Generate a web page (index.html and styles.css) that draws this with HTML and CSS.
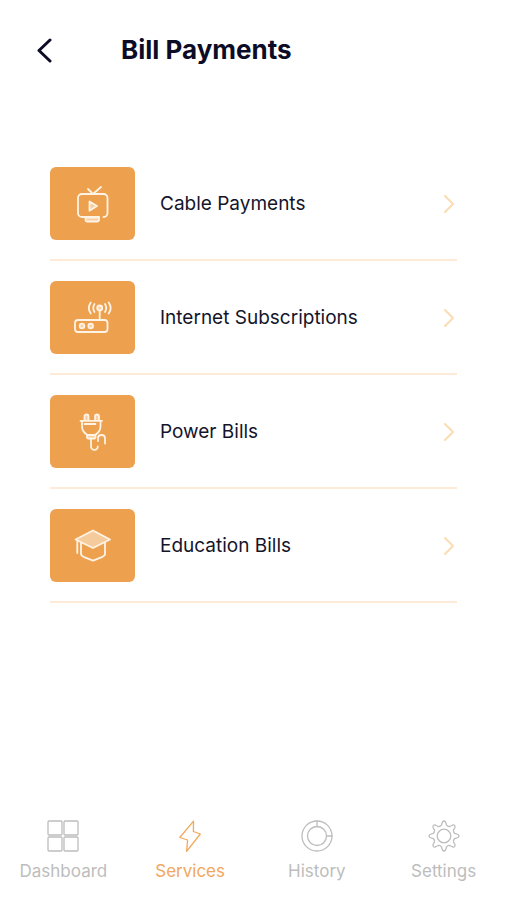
FILE: index.html
```html
<!DOCTYPE html>
<html lang="en">
<head>
<meta charset="utf-8">
<meta name="viewport" content="width=device-width, initial-scale=1">
<title>Bill Payments</title>
<link rel="stylesheet" href="styles.css">
</head>
<body>
<div class="app">
  <header class="topbar">
    <button class="back" type="button" aria-label="Back">
      <svg viewBox="0 0 16 26" aria-hidden="true"><path d="M13 3 2 13.500l11 10.500"/></svg>
    </button>
    <h1 class="title">Bill Payments</h1>
  </header>

  <main class="bills">
    <a class="bill" href="#cable">
      <span class="tile">
        <svg viewBox="0 0 85 73" aria-hidden="true">
          <path d="M43 27 51 20M43 27 38 22"/>
          <path d="M49 50H32a4 4 0 0 1-4-4V31a4 4 0 0 1 4-4h21.500a4 4 0 0 1 4 4v15a4 4 0 0 1-4 4"/>
          <path class="tint" d="M39.500 34.500v9.200l7.500-4.600z"/>
          <path class="tint" d="M35.500 50.500h13.500v2a2 2 0 0 1-2 2h-9.500a2 2 0 0 1-2-2z"/>
        </svg>
      </span>
      <span class="name">Cable Payments</span>
      <svg class="chevron" viewBox="0 0 14 18" aria-hidden="true"><path d="m2 1 8 8-8 8"/></svg>
    </a>
    <a class="bill" href="#internet">
      <span class="tile">
        <svg viewBox="0 0 85 73" aria-hidden="true">
          <rect x="25" y="39" width="32.500" height="12" rx="3"/>
          <circle class="tint" cx="32" cy="45" r="2.300"/><circle class="tint" cx="40.700" cy="45" r="2.300"/>
          <path d="M49.700 30v9"/><circle class="tint" cx="49.700" cy="27" r="2.500"/>
          <path d="M44.500 23q-2.500 4 0 8M40.800 21.500q-4 5.500 0 11M55 23q2.500 4 0 8M58.700 21.500q4 5.500 0 11"/>
        </svg>
      </span>
      <span class="name">Internet Subscriptions</span>
      <svg class="chevron" viewBox="0 0 14 18" aria-hidden="true"><path d="m2 1 8 8-8 8"/></svg>
    </a>
    <a class="bill" href="#power">
      <span class="tile">
        <svg viewBox="0 0 85 73" aria-hidden="true">
          <path class="tint" d="M34.500 25v-3.500a2 2 0 0 1 4 0V25M45 25v-3.500a2 2 0 0 1 4 0V25"/>
          <path d="M30.500 25.800h21.500M34.500 29h11"/>
          <path d="M32 26v5c0 4 2 7 5.500 9M50.500 26v5c0 4-2 7-5.500 9"/>
          <path class="tint" d="M37 40h8.500v2.500l-1 1h-6.500l-1-1z"/>
          <path d="M41 44v7.500a3.400 3.400 0 0 0 6.800 0M48 46v-2.500c0-4.700 7-4.700 7 0v5"/>
        </svg>
      </span>
      <span class="name">Power Bills</span>
      <svg class="chevron" viewBox="0 0 14 18" aria-hidden="true"><path d="m2 1 8 8-8 8"/></svg>
    </a>
    <a class="bill" href="#education">
      <span class="tile">
        <svg viewBox="0 0 85 73" aria-hidden="true">
          <path class="fill" d="M43 21.500 60 30.500 43 39 25.500 30.500z"/>
          <path d="M27.300 32v12M31 34v11.500q1 1.500 2.500 2.300L43 51.700l9.500-3.900q1.500-.8 2.500-2.300V34"/>
        </svg>
      </span>
      <span class="name">Education Bills</span>
      <svg class="chevron" viewBox="0 0 14 18" aria-hidden="true"><path d="m2 1 8 8-8 8"/></svg>
    </a>
  </main>

  <nav class="tabs" aria-label="Main">
    <a class="tab" href="#dashboard">
      <svg viewBox="0 0 32 32" aria-hidden="true"><rect x="1" y="1" width="14" height="14" rx="1"/><rect x="17" y="1" width="14" height="14" rx="1"/><rect x="1" y="17" width="14" height="14" rx="1"/><rect x="17" y="17" width="14" height="14" rx="1"/></svg>
      <span>Dashboard</span>
    </a>
    <a class="tab active" href="#services" aria-current="page">
      <svg viewBox="0 0 32 32" aria-hidden="true"><path d="M19.500 1.200 5.800 17.500l7.800 2.500-1 11.300L26.300 14l-6.900-2.500z"/></svg>
      <span>Services</span>
    </a>
    <a class="tab" href="#history">
      <svg viewBox="0 0 32 32" aria-hidden="true"><circle cx="16" cy="16" r="15"/><circle cx="16" cy="16" r="9.500"/><path d="M16 1v5.500M25.500 16H31"/></svg>
      <span>History</span>
    </a>
    <a class="tab" href="#settings">
      <svg viewBox="-16 -16 32 32" aria-hidden="true"><circle r="6.800"/><path d="M-1.500-14Q0-16 1.500-14L2.600-10.800Q4-9 5.800-9.500L8.800-11Q11.300-11.300 11-8.800L9.500-5.800Q9-4 10.800-2.600L14-1.500Q16 0 14 1.500L10.800 2.600Q9 4 9.500 5.800L11 8.800Q11.300 11.300 8.800 11L5.800 9.500Q4 9 2.600 10.800L1.500 14Q0 16-1.500 14L-2.600 10.800Q-4 9-5.800 9.500L-8.800 11Q-11.300 11.300-11 8.800L-9.500 5.800Q-9 4-10.800 2.600L-14 1.500Q-16 0-14-1.500L-10.800-2.600Q-9-4-9.500-5.800L-11-8.800Q-11.300-11.300-8.800-11L-5.800-9.500Q-4-9-2.600-10.800Z"/></svg>
      <span>Settings</span>
    </a>
  </nav>
</div>
</body>
</html>
```
FILE: styles.css
```css
* { box-sizing: border-box; }
body {
  margin: 0;
  background: #fff;
  color: #14142b;
  font-family: Inter, "Liberation Sans", sans-serif;
}
a { color: inherit; text-decoration: none; }
svg {
  fill: none;
  stroke: currentColor;
  stroke-linecap: round;
  stroke-linejoin: round;
}
.app {
  min-height: 100vh;
  display: flex;
  flex-direction: column;
}
.topbar {
  display: flex;
  align-items: center;
  gap: 68px;
  height: 100px;
  padding: 0 37px;
  color: #0d0c26;
}
.back {
  display: flex;
  padding: 0;
  border: 0;
  background: none;
  color: inherit;
}
.back svg { width: 16px; height: 26px; stroke-width: 3; }
.title { margin: 0; font-size: 26px; line-height: 32px; font-weight: 700; }
.bills {
  flex: 1;
  padding: 47px 50px 0;
}
.bill {
  display: grid;
  grid-template-columns: 85px 1fr 14px;
  column-gap: 25px;
  align-items: center;
  padding: 20px 0 19px;
  border-bottom: 2px solid #feebd7;
}
.bill:first-child { padding-top: 20px; }
.tile {
  height: 73px;
  border-radius: 6px;
  background: #eda04e;
  color: #fff3e5;
}
.tile svg { display: block; width: 100%; height: 100%; stroke-width: 1.8; }
.tint { fill: #f8cfa1; }
.fill { fill: #f6cb9b; }
.name { font-size: 19px; line-height: 24px; }
.chevron { width: 14px; height: 18px; color: #fbdcb4; stroke-width: 2; }
.tabs {
  display: grid;
  grid-template-columns: repeat(4, 1fr);
  padding-bottom: 18px;
}
.tab {
  display: flex;
  flex-direction: column;
  align-items: center;
  gap: 8px;
  color: #bdbdbd;
  font-size: 17px;
  line-height: 22px;
}
.tab svg { width: 32px; height: 32px; stroke-width: 1.3; }
.active { color: #f1a85c; }
```
